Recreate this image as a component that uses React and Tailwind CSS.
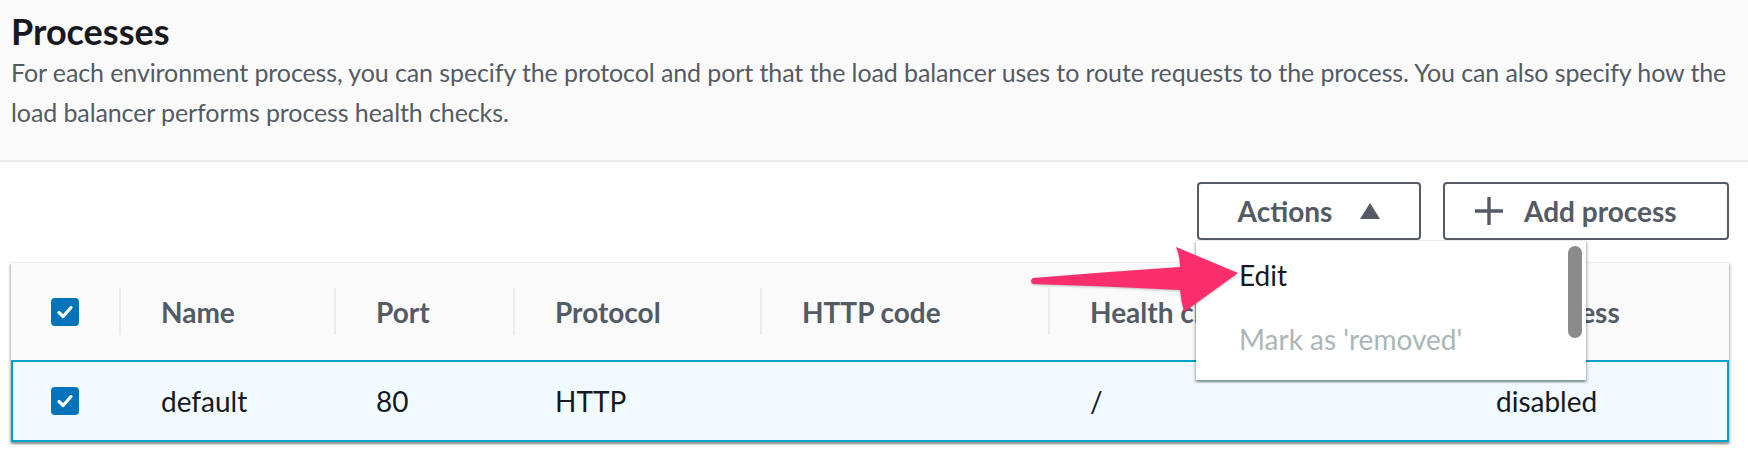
const columns = [
  { label: '', width: 'w-[108px]' },
  { label: 'Name', width: 'w-[215px]' },
  { label: 'Port', width: 'w-[179px]' },
  { label: 'Protocol', width: 'w-[247px]' },
  { label: 'HTTP code', width: 'w-[288px]' },
  { label: 'Health check path', width: 'w-[406px]' },
  { label: 'Stickiness', width: 'w-[275px]' },
]

const row = ['default', '80', 'HTTP', '', '/', 'disabled']

function Checkbox() {
  return (
    <div className="w-[28px] h-[28px] rounded-[4px] bg-[#0073bb] flex items-center justify-center">
      <svg width="20" height="20" viewBox="0 0 20 20" fill="none">
        <path d="M4 10.5 L8.2 14.5 L16 5.5" stroke="white" strokeWidth="3.2" strokeLinecap="round" strokeLinejoin="round" />
      </svg>
    </div>
  )
}

function Arrow() {
  return (
    <svg
      className="absolute z-20 left-[1020px] top-[236px] pointer-events-none drop-shadow-[0_1px_1px_rgba(0,0,0,0.25)]"
      width="230"
      height="84"
      viewBox="0 0 230 84"
    >
      <path
        d="M13,42 Q85,36 160,31 Q160,20 156,11 L218,37 L164,76 Q161,64 160,54 Q85,50 13,48 Q9,45 13,42 Z"
        fill="#fb2e6d"
      />
    </svg>
  )
}

export default function App() {
  return (
    <div className="relative w-[1748px] h-[460px] bg-white overflow-hidden font-['Lato',sans-serif]">
      <div className="bg-[#fafafa] border-b-2 border-[#eaeded] pl-[11px] pr-[8px] pt-[11px] pb-[28px]">
        <h2 className="text-[36px] leading-[41px] font-bold text-[#16191f]">Processes</h2>
        <p className="text-[25px] leading-[40px] tracking-[-0.1px] text-[#545b64]">
          For each environment process, you can specify the protocol and port that the load balancer uses to route
          requests to the process. You can also specify how the load balancer performs process health checks.
        </p>
      </div>

      <div className="pl-[11px] pr-[19px]">
        <div className="flex justify-end gap-[22px] pt-[20px] pb-[22px]">
          <div className="relative">
            <button className="w-[224px] h-[58px] border-2 border-[#545b64] rounded-[4px] bg-white flex items-center justify-center gap-[28px] text-[28px] font-bold text-[#545b64]">
              <span>Actions</span>
              <svg width="20" height="16" viewBox="0 0 20 16">
                <path d="M10 0 L20 16 L0 16 Z" fill="#545b64" />
              </svg>
            </button>
            <div className="absolute left-[-1px] top-[58px] z-10 w-[390px] h-[140px] bg-white shadow-[0_2px_2px_0_rgba(0,28,36,0.3),2px_2px_2px_0_rgba(0,28,36,0.15),-2px_2px_2px_0_rgba(0,28,36,0.15)] border-t border-[#eaeded]">
              <div className="pt-[2px]">
                <div className="h-[64px] flex items-center pl-[43px] text-[28px] text-[#16191f]">Edit</div>
                <div className="h-[64px] flex items-center pl-[43px] text-[28px] text-[#aab7b8]">Mark as 'removed'</div>
              </div>
              <div className="absolute right-[4px] top-[5px] w-[14px] h-[92px] rounded-full bg-[#8b8b8b]" />
            </div>
          </div>
          <button className="w-[286px] h-[58px] border-2 border-[#545b64] rounded-[4px] bg-white flex items-center pl-[29px] gap-[20px] text-[28px] font-bold text-[#545b64]">
            <svg width="30" height="30" viewBox="0 0 30 30">
              <path d="M15 1 V29 M1 15 H29" stroke="#545b64" strokeWidth="3.4" />
            </svg>
            <span>Add process</span>
          </button>
        </div>

        <div className="border-t border-[#eaeded] shadow-[0_2px_2px_0_rgba(0,28,36,0.3),2px_2px_2px_0_rgba(0,28,36,0.15),-2px_2px_2px_0_rgba(0,28,36,0.15)]">
          <div className="flex h-[97px] bg-[#fafafa]">
            {columns.map((col, i) => (
              <div key={i} className={`${col.width} flex items-center`}>
                {i === 0 ? (
                  <div className="w-full flex justify-center">
                    <Checkbox />
                  </div>
                ) : (
                  <>
                    <div className="w-[2px] h-[47px] bg-[#eaeded]" />
                    <span className="ml-[40px] text-[28px] font-bold text-[#545b64] whitespace-nowrap">{col.label}</span>
                  </>
                )}
              </div>
            ))}
          </div>
          <div className="flex h-[82px] bg-[#f1faff] shadow-[inset_0_0_0_2px_#00a1c9]">
            {columns.map((col, i) => (
              <div key={i} className={`${col.width} flex items-center`}>
                {i === 0 ? (
                  <div className="w-full flex justify-center">
                    <Checkbox />
                  </div>
                ) : (
                  <span className="ml-[42px] text-[28px] text-[#16191f]">{row[i - 1]}</span>
                )}
              </div>
            ))}
          </div>
        </div>
      </div>

      <Arrow />
    </div>
  )
}
